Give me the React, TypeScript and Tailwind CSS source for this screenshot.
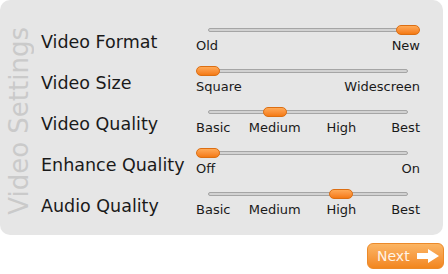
import React from "react";

type S = { label: string; options: string[]; value: number };

const sliders: S[] = [
  { label: "Video Format", options: ["Old", "New"], value: 1 },
  { label: "Video Size", options: ["Square", "Widescreen"], value: 0 },
  { label: "Video Quality", options: ["Basic", "Medium", "High", "Best"], value: 1 },
  { label: "Enhance Quality", options: ["Off", "On"], value: 0 },
  { label: "Audio Quality", options: ["Basic", "Medium", "High", "Best"], value: 2 },
];

function Slider({ options, value }: { options: string[]; value: number }) {
  const n = options.length;
  const frac = value / (n - 1);
  return (
    <div className="w-[224px]">
      <div className="relative mx-[12px] flex h-[12px] items-center">
        <div className="h-[4px] w-full rounded-full border border-[#a5a5a5] bg-[#d2d2d2]" />
        <div
          className="absolute top-[1px] h-[10px] w-[24px] -translate-x-1/2 rounded-[5px] border border-[#dc6e12] bg-linear-to-b from-[#ffa955] to-[#f47a10]"
          style={{ left: `${frac * 100}%` }}
        />
      </div>
      <div className="relative mt-[2px] flex h-[16px] justify-between text-[13px] leading-[16px] text-[#1a1a1a]">
        <span>{options[0]}</span>
        {options.slice(1, n - 1).map((o, i) => (
          <span
            key={o}
            className="absolute top-0 -translate-x-1/2"
            style={{ left: `${12 + ((i + 1) / (n - 1)) * 200}px` }}
          >
            {o}
          </span>
        ))}
        <span>{options[n - 1]}</span>
      </div>
    </div>
  );
}

export default function App() {
  return (
    <div
      className="h-[274px] w-[448px] bg-white"
      style={{ fontFamily: '"DejaVu Sans", Verdana, sans-serif' }}
    >
      <div className="flex w-[443px] rounded-[10px] bg-[#e6e6e6] pb-[17px] pt-[24px]">
        <div className="ml-[6px] mr-[9px] flex w-[26px] items-center self-stretch">
          <span className="rotate-180 text-[26px] leading-[26px] text-[#cacaca] [writing-mode:vertical-rl] whitespace-nowrap">
            Video Settings
          </span>
        </div>
        <div className="flex flex-col gap-[11px]">
          {sliders.map((s) => (
            <div key={s.label} className="flex h-[30px]">
              <div className="mt-[8px] w-[155px] whitespace-nowrap text-[17.5px] leading-[20px] text-[#1a1a1a]">
                {s.label}
              </div>
              <Slider options={s.options} value={s.value} />
            </div>
          ))}
        </div>
      </div>
      <div className="mt-[8px] flex w-[444px] justify-end">
        <div className="flex h-[26px] w-[77px] items-center gap-[6px] rounded-[6px] border border-[#ec8a2a] bg-linear-to-b from-[#fbb563] to-[#f2861c] pl-[9px]">
          <span className="text-[14px] leading-[16px] text-[#fff3e6]">Next</span>
          <svg width="24" height="16" viewBox="0 0 24 16">
            <path d="M1 5 H12 V1 L23 8 L12 15 V11 H1 Z" fill="#ffffff" />
          </svg>
        </div>
      </div>
    </div>
  );
}
